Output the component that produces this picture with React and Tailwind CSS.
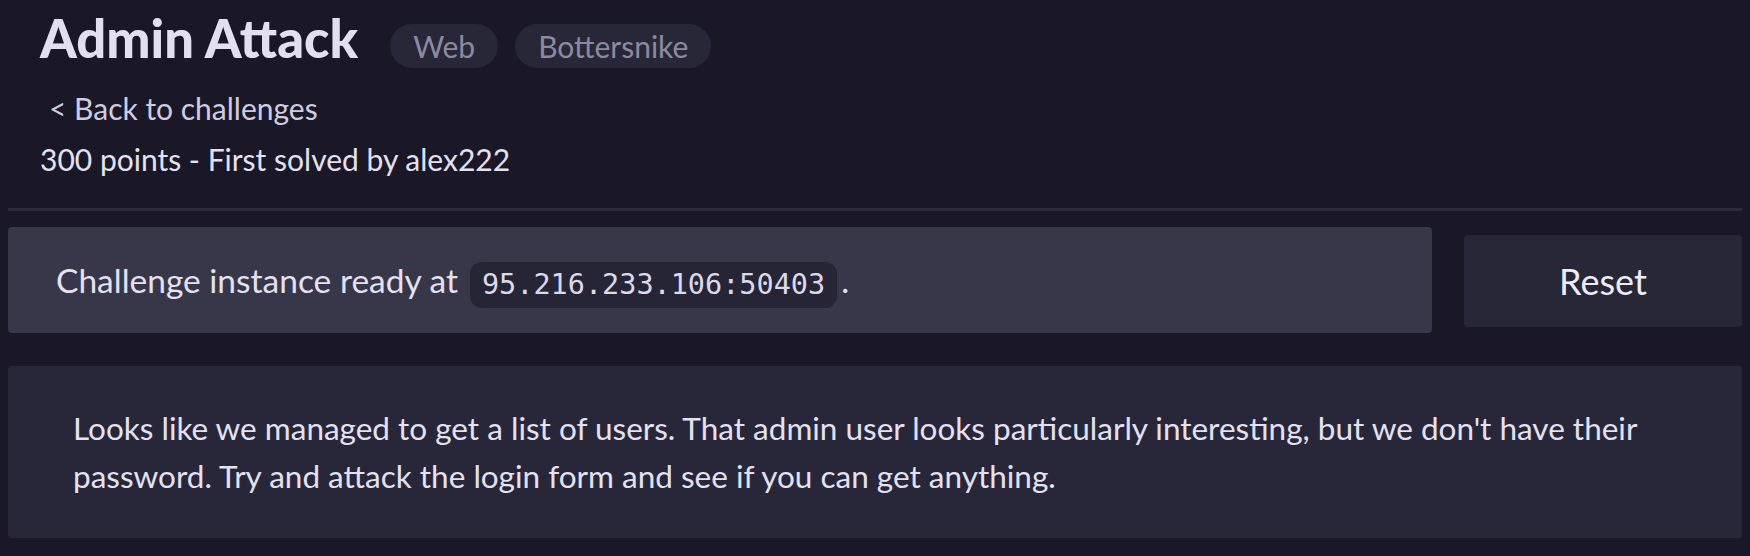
import React from 'react';

const Badge = ({ children }) => (
  <span className="rounded-full bg-[#282738] px-[23px] py-[5px] text-[30px] leading-[34px] text-[#8b8aa3]">
    {children}
  </span>
);

const App = () => {
  return (
    <div className="min-h-screen bg-[#1a1827] px-2 font-['Lato',sans-serif] text-[#e4e1f1]">
      <div className="px-[32px] pt-[7px]">
        <div className="flex items-baseline">
          <h1 className="text-[52.5px] leading-[62px] font-black text-[#e2dff0]">Admin Attack</h1>
          <div className="ml-[32px] flex items-baseline gap-[17px]">
            <Badge>Web</Badge>
            <Badge>Bottersnike</Badge>
          </div>
        </div>
        <a href="#" className="mt-[21px] ml-[9px] block text-[30px] leading-[36px] text-[#cfcce2]">
          &lt; Back to challenges
        </a>
        <p className="mt-[15px] text-[30px] leading-[36px]">300 points - First solved by alex222</p>
      </div>

      <div className="mt-[31px] h-[3px] bg-[#2c2a3c]" />

      <div className="mt-[16px] flex items-center gap-[32px]">
        <div className="flex h-[106px] flex-1 items-center rounded bg-[#383649] pl-[48px] text-[33.5px]">
          <span>Challenge instance ready at</span>
          <code className="mt-[9px] ml-[12px] rounded-xl bg-[#262536] px-[12px] py-[4px] font-['DejaVu_Sans_Mono',monospace] text-[28.5px] leading-[38px] text-[#dcd9ea]">
            95.216.233.106:50403
          </code>
          <span className="ml-[4px]">.</span>
        </div>
        <button
          type="button"
          className="mt-[2px] h-[92px] w-[278px] rounded bg-[#282738] text-[36px] text-[#eeecf6]"
        >
          Reset
        </button>
      </div>

      <div className="mt-[33px] rounded bg-[#282739] px-[65px] py-[38px] text-[31.5px] leading-[48px]">
        <p>
          Looks like we managed to get a list of users. That admin user looks particularly interesting, but we
          don't have their password. Try and attack the login form and see if you can get anything.
        </p>
      </div>
    </div>
  );
};

export default App;
